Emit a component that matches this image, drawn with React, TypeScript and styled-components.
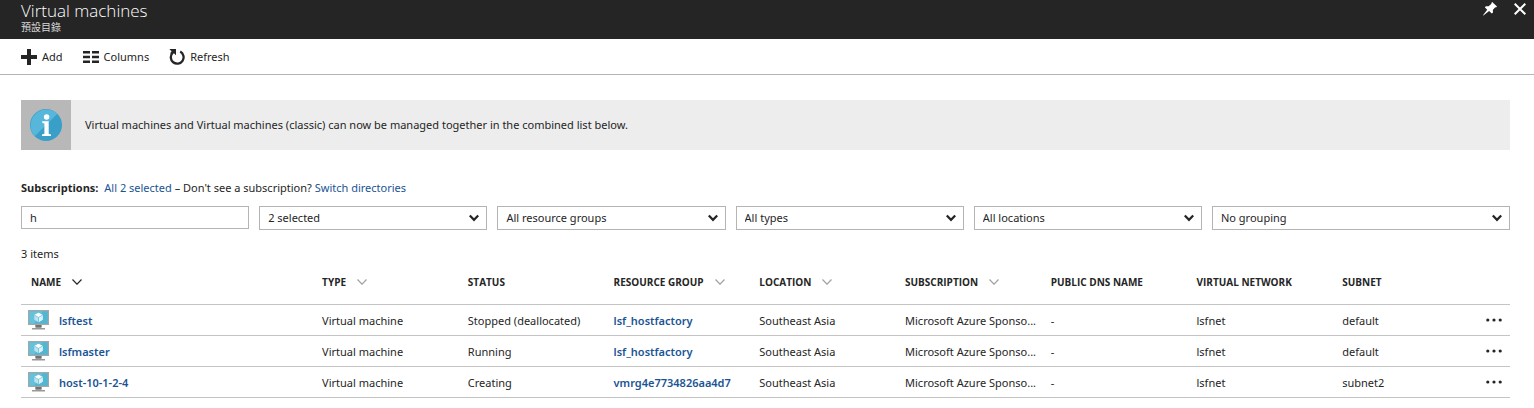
import React from "react";
import styled, { createGlobalStyle, css } from "styled-components";

const displayFont = `"Open Sans", "Noto Sans CJK TC", sans-serif`;

const GlobalStyle = createGlobalStyle`
  *, *::before, *::after { box-sizing: border-box; }
  body {
    margin: 0;
    background: #fff;
    color: #252525;
    font: 11px/16px "Segoe UI", "Noto Sans", "Noto Sans CJK TC", sans-serif;
  }
  button, input, select { font: inherit; color: inherit; }
`;

const link = css`
  color: #1a5494;
  text-decoration: none;
  &:hover { text-decoration: underline; }
`;

const Header = styled.header`
  display: flex;
  justify-content: space-between;
  align-items: flex-start;
  height: 39px;
  padding: 0 4px 0 21px;
  background: #252525;
  color: #fff;
`;

const Title = styled.h1`
  margin: 0;
  font-family: ${displayFont};
  font-size: 17px;
  line-height: 21px;
  font-weight: 300;
`;

const Subtitle = styled.p`
  margin: 0;
  font-size: 10px;
  line-height: 12px;
  color: #d8d8d8;
`;

const WindowActions = styled.div`
  display: flex;
  gap: 10px;
`;

const IconButton = styled.button`
  display: grid;
  place-items: center;
  width: 20px;
  height: 18px;
  padding: 0;
  border: 0;
  background: none;
  cursor: pointer;
`;

const WindowButton = styled(IconButton)`
  color: #fff;
`;

const Toolbar = styled.div`
  display: flex;
  align-items: center;
  gap: 20px;
  height: 36px;
  padding: 0 21px;
  border-bottom: 1px solid #b4b4b4;
`;

const ToolButton = styled.button`
  display: flex;
  align-items: center;
  gap: 5px;
  padding: 0;
  border: 0;
  background: none;
  cursor: pointer;
`;

const Content = styled.main`
  padding: 25px 24px 10px 21px;
`;

const Banner = styled.div`
  display: flex;
  align-items: center;
  min-height: 50px;
  background: #ededed;
`;

const BannerIcon = styled.div`
  display: grid;
  place-items: center;
  width: 50px;
  height: 50px;
  margin-right: 14px;
  background: #b8b8b8;
`;

const Subscriptions = styled.p`
  margin: 30px 0 10px;
  b { margin-right: 3px; font-family: ${displayFont}; }
`;

const Link = styled.a`
  ${link}
`;

const StrongLink = styled.a`
  ${link}
  font-weight: 600;
`;

const Filters = styled.div`
  display: grid;
  grid-template-columns: repeat(5, minmax(0, 1fr)) 298px;
  align-items: start;
  gap: 10px;
`;

const FilterInput = styled.input`
  width: 100%;
  height: 23px;
  padding: 0 8px;
  border: 1px solid #b4b4b4;
  border-radius: 0;
  background: #fff;
`;

const SelectBox = styled.div`
  position: relative;
`;

const FilterSelect = styled.select`
  display: block;
  width: 100%;
  height: 24px;
  padding: 0 24px 0 8px;
  border: 1px solid #b4b4b4;
  border-radius: 0;
  background: #fff;
  appearance: none;
`;

const SelectArrow = styled.svg`
  position: absolute;
  top: 8px;
  right: 8px;
  pointer-events: none;
`;

const Count = styled.p`
  margin: 16px 0 8px;
`;

const Table = styled.table`
  width: 100%;
  table-layout: fixed;
  border-collapse: collapse;
`;

const NameCol = styled.col`
  width: 19.55%;
`;

const MenuCol = styled.col`
  width: 32px;
`;

const HeadCell = styled.th`
  height: 34px;
  padding: 0 0 9px 10px;
  text-align: left;
  font-family: ${displayFont};
  font-size: 10px;
  font-weight: 700;
  white-space: nowrap;
  border-bottom: 1px solid #c4c4c4;
`;

const SortButton = styled.button<{ $active?: boolean }>`
  display: flex;
  align-items: center;
  gap: 11px;
  padding: 0;
  border: 0;
  background: none;
  cursor: pointer;
  svg { color: ${(p) => (p.$active ? "#252525" : "#a0a0a0")}; }
`;

const Cell = styled.td`
  height: 31px;
  padding: 2px 0 0 10px;
  white-space: nowrap;
  border-bottom: 1px solid #c4c4c4;
`;

const NameCell = styled(Cell)`
  padding: 0 0 0 7px;
`;

const MenuCell = styled(Cell)`
  padding: 0 0 0 6px;
`;

const NameContent = styled.div`
  display: flex;
  align-items: center;
  gap: 10px;
  a { padding-top: 2px; }
`;

const PinIcon = () => (
  <svg width="14" height="14" viewBox="0 0 14 14" fill="currentColor" aria-hidden="true">
    <path d="M9.2 0 14 4.6l-1 .9-.8-.2-2.4 2.6.2 2.5-1.2 1.2-2.7-2.5L.4 13.6l-.4-.3 4.2-5.6L1.8 5.2 3 4.2l2.6.1 2.9-2.5-.2-.8z" />
  </svg>
);

const CloseIcon = () => (
  <svg width="12" height="12" viewBox="0 0 12 12" fill="none" stroke="currentColor" strokeWidth="2" aria-hidden="true">
    <path d="M.7.7l10.6 10.6M11.3.7.7 11.3" />
  </svg>
);

const AddIcon = () => (
  <svg width="16" height="16" viewBox="0 0 16 16" fill="currentColor" aria-hidden="true">
    <path d="M6 0h4v6h6v4h-6v6H6v-6H0V6h6z" />
  </svg>
);

const ColumnsIcon = () => (
  <svg width="16" height="12" viewBox="0 0 16 12" fill="currentColor" aria-hidden="true">
    <path d="M0 0h7v2.500H0zM9 0h7v2.500H9zM0 4.700h7v2.500H0zM9 4.700h7v2.500H9zM0 9.400h7v2.500H0zM9 9.400h7v2.500H9z" />
  </svg>
);

const RefreshIcon = () => (
  <svg width="16" height="16" viewBox="0 0 16 16" aria-hidden="true">
    <path d="M11.2 2.6A6.4 6.4 0 1 1 3.6 3.8" fill="none" stroke="currentColor" strokeWidth="2.3" />
    <path d="M.4 0H7v6.2L4.9 4.3 2.6 5.9 1.2 4l1.4-1.6z" fill="currentColor" />
  </svg>
);

const InfoIcon = () => (
  <svg width="32" height="32" viewBox="0 0 32 32" aria-hidden="true">
    <circle cx="16" cy="16" r="16" fill="#3a9fc8" />
    <path d="M27.3 4.7A16 16 0 0 0 4.7 27.3z" fill="#56b7db" />
    <circle cx="16.6" cy="8" r="2.7" fill="#fff" />
    <path d="M12.2 12.3h6.5v12.4l2.3.7V27h-9v-1.6l2.4-.7V14.6l-2.2-.8z" fill="#fff" />
  </svg>
);

const VmIcon = () => (
  <svg width="21" height="20" viewBox="0 0 21 20" aria-hidden="true">
    <path d="M0 0h21v15H0z" fill="#a3a7a6" />
    <path d="M1.3 1.3h18.4v12.4H1.3z" fill="#4fb6d3" />
    <path d="M1.3 1.3H15L6 13.7H1.3z" fill="#66c1da" />
    <path d="M10.5 2.8 14.7 5v4.8l-4.2 2.4-4.2-2.4V5z" fill="#b9e2f2" />
    <path d="m10.5 2.8 4.2 2.2-4.2 2.4L6.3 5z" fill="#fff" />
    <path d="M10.5 7.4 14.7 5v4.8l-4.2 2.4z" fill="#ddf2fa" />
    <path d="M10.5 7.4v4.8M6.3 5l4.2 2.4L14.7 5" stroke="#5cb9d8" strokeWidth=".7" fill="none" />
    <path d="M7.5 15h6v3h3.5v1.6H4V18h3.5z" fill="#989898" />
    <path d="M7.5 15h6v2h-6z" fill="#6f7475" />
  </svg>
);

const SortIcon = () => (
  <svg width="10" height="6" viewBox="0 0 10 6" fill="none" stroke="currentColor" strokeWidth="1.2" aria-hidden="true">
    <path d="m.5.5 4.5 4.7L9.5.5" />
  </svg>
);

const MoreIcon = () => (
  <svg width="16" height="4" viewBox="0 0 16 4" fill="currentColor" aria-hidden="true">
    <circle cx="1.8" cy="2" r="1.6" />
    <circle cx="8" cy="2" r="1.6" />
    <circle cx="14.2" cy="2" r="1.6" />
  </svg>
);

const filters = [
  { label: "Subscriptions", value: "2 selected" },
  { label: "Resource groups", value: "All resource groups" },
  { label: "Types", value: "All types" },
  { label: "Locations", value: "All locations" },
  { label: "Grouping", value: "No grouping" },
];

const columns = [
  { title: "NAME", sortable: true, active: true },
  { title: "TYPE", sortable: true },
  { title: "STATUS" },
  { title: "RESOURCE GROUP", sortable: true },
  { title: "LOCATION", sortable: true },
  { title: "SUBSCRIPTION", sortable: true },
  { title: "PUBLIC DNS NAME" },
  { title: "VIRTUAL NETWORK" },
  { title: "SUBNET" },
];

const machines = [
  { name: "lsftest", status: "Stopped (deallocated)", group: "lsf_hostfactory", subnet: "default" },
  { name: "lsfmaster", status: "Running", group: "lsf_hostfactory", subnet: "default" },
  { name: "host-10-1-2-4", status: "Creating", group: "vmrg4e7734826aa4d7", subnet: "subnet2" },
];

export default function App() {
  return (
    <>
      <GlobalStyle />
      <Header>
        <div>
          <Title>Virtual machines</Title>
          <Subtitle>預設目錄</Subtitle>
        </div>
        <WindowActions>
          <WindowButton aria-label="Pin"><PinIcon /></WindowButton>
          <WindowButton aria-label="Close"><CloseIcon /></WindowButton>
        </WindowActions>
      </Header>
      <Toolbar>
        <ToolButton><AddIcon />Add</ToolButton>
        <ToolButton><ColumnsIcon />Columns</ToolButton>
        <ToolButton><RefreshIcon />Refresh</ToolButton>
      </Toolbar>
      <Content>
        <Banner>
          <BannerIcon><InfoIcon /></BannerIcon>
          Virtual machines and Virtual machines (classic) can now be managed together in the combined list below.
        </Banner>
        <Subscriptions>
          <b>Subscriptions:</b>{" "}
          <Link href="#subscriptions">All 2 selected</Link> – Don't see a subscription?{" "}
          <Link href="#directories">Switch directories</Link>
        </Subscriptions>
        <Filters>
          <FilterInput aria-label="Filter by name" defaultValue="h" />
          {filters.map((f) => (
            <SelectBox key={f.label}>
              <FilterSelect aria-label={f.label}>
                <option>{f.value}</option>
              </FilterSelect>
              <SelectArrow width="10" height="8" viewBox="0 0 10 8" fill="none" stroke="#252525" strokeWidth="2.2" aria-hidden="true">
                <path d="m.8 1.4 4.2 4.4 4.2-4.4" />
              </SelectArrow>
            </SelectBox>
          ))}
        </Filters>
        <Count>3 items</Count>
        <Table>
          <colgroup>
            <NameCol />
            {columns.slice(1).map((c) => <col key={c.title} />)}
            <MenuCol />
          </colgroup>
          <thead>
            <tr>
              {columns.map((c) => (
                <HeadCell key={c.title} scope="col">
                  {c.sortable ? (
                    <SortButton $active={c.active}>{c.title}<SortIcon /></SortButton>
                  ) : c.title}
                </HeadCell>
              ))}
              <HeadCell as="td" />
            </tr>
          </thead>
          <tbody>
            {machines.map((m) => (
              <tr key={m.name}>
                <NameCell>
                  <NameContent>
                    <VmIcon />
                    <StrongLink href={`#${m.name}`}>{m.name}</StrongLink>
                  </NameContent>
                </NameCell>
                <Cell>Virtual machine</Cell>
                <Cell>{m.status}</Cell>
                <Cell><StrongLink href={`#${m.group}`}>{m.group}</StrongLink></Cell>
                <Cell>Southeast Asia</Cell>
                <Cell>Microsoft Azure Sponso...</Cell>
                <Cell>-</Cell>
                <Cell>lsfnet</Cell>
                <Cell>{m.subnet}</Cell>
                <MenuCell>
                  <IconButton aria-label={`More actions for ${m.name}`}><MoreIcon /></IconButton>
                </MenuCell>
              </tr>
            ))}
          </tbody>
        </Table>
      </Content>
    </>
  );
}
